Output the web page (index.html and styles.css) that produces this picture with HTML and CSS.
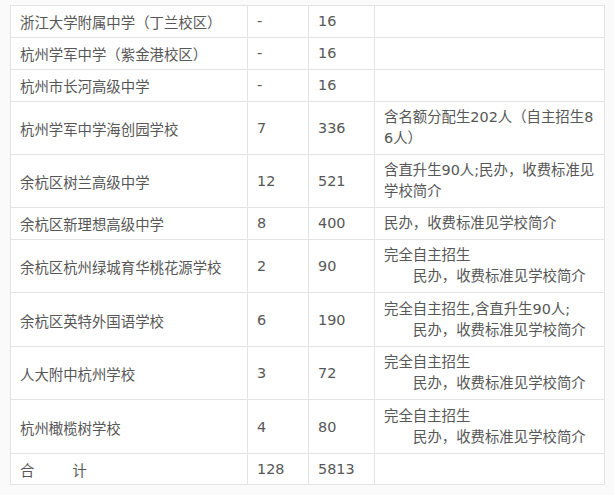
FILE: index.html
```html
<!DOCTYPE html>
<html lang="zh-CN">
<head>
<meta charset="utf-8">
<link rel="stylesheet" href="styles.css">
</head>
<body>
<div class="page">
<table class="plan">
<colgroup><col class="c1"><col class="c2"><col class="c3"><col class="c4"></colgroup>
<tbody>
<tr><td>浙江大学附属中学（丁兰校区）</td><td>-</td><td>16</td><td></td></tr>
<tr><td>杭州学军中学（紫金港校区）</td><td>-</td><td>16</td><td></td></tr>
<tr><td>杭州市长河高级中学</td><td>-</td><td>16</td><td></td></tr>
<tr><td>杭州学军中学海创园学校</td><td>7</td><td>336</td><td>含名额分配生202人（自主招生8<br>6人）</td></tr>
<tr><td>余杭区树兰高级中学</td><td>12</td><td>521</td><td>含直升生90人;民办，收费标准见<br>学校简介</td></tr>
<tr><td>余杭区新理想高级中学</td><td>8</td><td>400</td><td>民办，收费标准见学校简介</td></tr>
<tr><td>余杭区杭州绿城育华桃花源学校</td><td>2</td><td>90</td><td>完全自主招生<span class="indent">民办，收费标准见学校简介</span></td></tr>
<tr class="tall"><td>余杭区英特外国语学校</td><td>6</td><td>190</td><td>完全自主招生,含直升生90人;<span class="indent">民办，收费标准见学校简介</span></td></tr>
<tr><td>人大附中杭州学校</td><td>3</td><td>72</td><td>完全自主招生<span class="indent">民办，收费标准见学校简介</span></td></tr>
<tr class="tall"><td>杭州橄榄树学校</td><td>4</td><td>80</td><td>完全自主招生<span class="indent">民办，收费标准见学校简介</span></td></tr>
<tr class="short"><td>合<span class="gap"></span>计</td><td>128</td><td>5813</td><td></td></tr>
</tbody>
</table>
</div>
</body>
</html>
```
FILE: styles.css
```css
html, body {
  margin: 0;
  padding: 0;
  background: #fafafa;
}
.page {
  padding: 5px 0 0 10px;
}
.plan {
  border-collapse: collapse;
  table-layout: fixed;
  width: 594px;
  background: #ffffff;
  font-family: "DejaVu Sans", "Noto Sans CJK SC", sans-serif;
  font-size: 14.4px;
  line-height: 21px;
  color: #575757;
}
.c1 { width: 237px; }
.c2 { width: 61px; }
.c3 { width: 66px; }
.c4 { width: 230px; }
.plan td {
  border: 1px solid #e3e3e3;
  padding: 5px 9px 5px 9px;
  vertical-align: middle;
  white-space: nowrap;
  overflow: hidden;
}
.plan td:first-child {
  font-family: "Noto Sans CJK SC", sans-serif;
}
.plan .tall td {
  padding-top: 6px;
}
.plan .short td {
  padding-top: 5px;
  padding-bottom: 4px;
}
.indent {
  display: block;
  padding-left: 29px;
}
.gap {
  display: inline-block;
  width: 38px;
}
```
